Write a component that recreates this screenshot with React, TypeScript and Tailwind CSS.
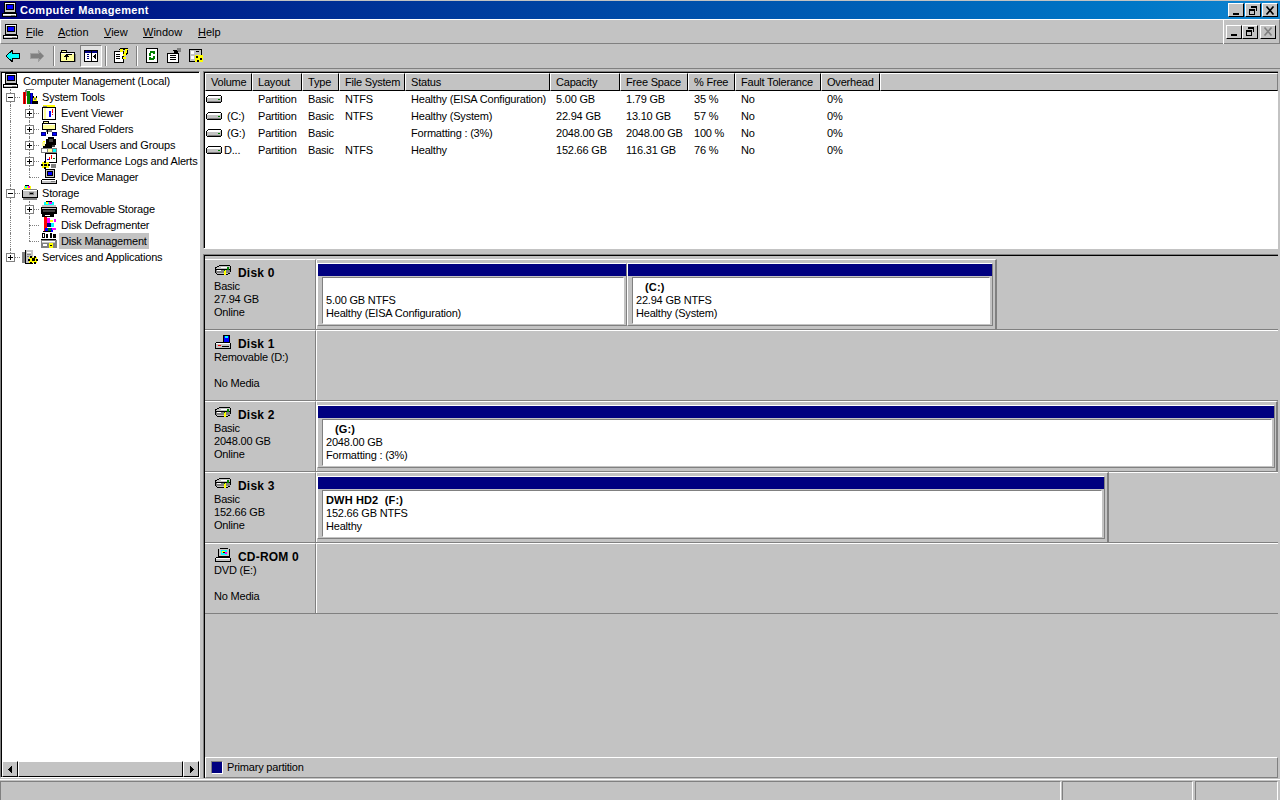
import React from 'react';

type R = [number, number, number, number, string];

// small pixel icon, drawn from rects
const Px: React.FC<{ r: R[]; w?: number; h?: number }> = ({ r, w = 16, h = 16 }) => (
  <svg width={w} height={h} viewBox={`0 0 ${w} ${h}`} shapeRendering="crispEdges" className="shrink-0 block">
    {r.map((p, i) => (
      <rect key={i} x={p[0]} y={p[1]} width={p[2]} height={p[3]} fill={p[4]} />
    ))}
  </svg>
);

const K = '#000000';
const G = '#808080';
const L = '#c3c3c3';
const W = '#ffffff';
const B = '#0000ff';
const N = '#000080';
const Y = '#ffff00';
const F = '#ffff99';
const C = '#00ffff';
const M = '#ff00ff';
const RD = '#ff0000';
const GR = '#008000';

const computer: R[] = [
  [2, 0, 12, 11, K], [3, 1, 10, 9, L], [4, 2, 8, 6, K], [5, 3, 6, 4, B], [3, 1, 10, 1, W],
  [0, 11, 15, 4, K], [1, 12, 13, 2, L], [1, 12, 13, 1, W], [9, 13, 4, 1, G],
];
const drive: R[] = [
  [2, 3, 13, 1, K], [1, 4, 1, 1, K], [0, 5, 1, 5, K], [15, 4, 1, 6, K], [1, 10, 14, 1, K],
  [1, 5, 14, 5, L], [2, 4, 13, 1, W], [1, 5, 13, 1, W], [2, 9, 13, 1, G], [12, 7, 2, 1, GR],
];
const folder: R[] = [
  [1, 2, 6, 2, K], [2, 3, 4, 1, F], [0, 4, 15, 10, K], [1, 5, 13, 8, F], [1, 5, 13, 1, W], [15, 6, 1, 8, G],
];
const systemTools: R[] = [
  [4, 0, 8, 1, G], [3, 1, 2, 6, G], [1, 3, 3, 12, RD], [2, 3, 1, 12, '#800000'], [5, 2, 3, 13, GR], [8, 4, 3, 11, N], [9, 4, 1, 11, B],
  [11, 8, 4, 4, Y], [10, 12, 6, 3, K], [12, 9, 2, 2, G], [11, 7, 1, 2, K], [14, 7, 1, 2, K],
];
const eventViewer: R[] = [
  [2, 0, 12, 2, Y], [2, 1, 4, 1, G], [1, 2, 14, 13, K], [2, 3, 12, 11, W], [3, 3, 2, 11, F], [8, 6, 2, 6, B], [11, 4, 1, 4, RD], [11, 9, 1, 1, RD],
];
const sharedFolders: R[] = [
  [2, 0, 6, 2, K], [3, 1, 4, 1, F], [1, 2, 14, 7, K], [2, 3, 12, 5, F], [2, 3, 12, 1, W],
  [5, 9, 6, 2, G], [6, 9, 1, 4, K], [0, 11, 5, 4, N], [11, 11, 5, 4, N], [1, 12, 3, 2, B], [12, 12, 3, 2, B],
];
const users: R[] = [
  [7, 0, 6, 2, K], [5, 2, 10, 6, K], [8, 2, 4, 3, '#404040'], [2, 7, 9, 5, K], [11, 8, 3, 2, '#404040'],
  [0, 11, 16, 5, G], [1, 12, 5, 3, W], [7, 12, 4, 3, F], [12, 12, 3, 3, C], [1, 5, 3, 4, F], [2, 4, 2, 1, Y],
];
const perfLogs: R[] = [
  [4, 0, 12, 10, K], [5, 1, 10, 8, W], [6, 6, 2, 1, B], [8, 4, 1, 3, RD], [10, 2, 1, 4, RD], [12, 5, 2, 1, GR],
  [1, 9, 7, 6, Y], [0, 11, 2, 2, K], [7, 11, 2, 2, K], [3, 8, 2, 2, K], [3, 14, 2, 2, K], [3, 11, 3, 2, K], [10, 11, 5, 4, G],
];
const deviceMgr: R[] = [
  [4, 0, 10, 9, K], [5, 1, 8, 7, L], [6, 2, 6, 5, K], [7, 3, 4, 3, B], [1, 10, 13, 1, K], [0, 11, 16, 4, K], [1, 11, 14, 3, L], [1, 11, 14, 1, W], [10, 12, 4, 1, G],
];
const storage: R[] = [
  [3, 0, 4, 1, K], [2, 1, 7, 3, Y], [3, 1, 2, 2, C], [6, 1, 2, 2, M], [1, 4, 14, 1, G], [0, 5, 16, 8, K], [1, 5, 14, 7, L], [1, 5, 14, 1, W], [7, 7, 5, 3, G], [8, 8, 3, 1, K],
  [1, 13, 14, 2, G],
];
const removable: R[] = [
  [5, 0, 6, 1, K], [3, 1, 10, 3, C], [5, 1, 2, 2, Y], [8, 1, 3, 2, M], [1, 4, 14, 2, L], [0, 6, 16, 7, K], [1, 7, 14, 1, L], [2, 9, 12, 2, '#404040'], [1, 13, 12, 3, K], [4, 14, 5, 1, W],
];
const defrag: R[] = [
  [3, 0, 3, 14, RD], [6, 1, 3, 5, M], [9, 3, 3, 2, Y], [6, 6, 4, 4, N], [10, 6, 3, 4, C], [13, 2, 2, 3, M], [4, 11, 8, 4, B], [7, 11, 3, 3, GR], [11, 11, 4, 2, M], [2, 14, 8, 1, K],
];
const diskMgmt: R[] = [
  [1, 0, 3, 5, K], [2, 1, 1, 3, W], [5, 1, 2, 4, K], [9, 0, 2, 5, K], [12, 1, 3, 4, K], [0, 6, 15, 1, K], [0, 7, 16, 8, G], [1, 8, 13, 2, L], [1, 8, 13, 1, W], [2, 11, 4, 2, W], [8, 10, 4, 5, Y], [9, 12, 2, 1, K],
];
const services: R[] = [
  [3, 1, 8, 14, K], [4, 1, 7, 13, L], [5, 3, 4, 1, W], [5, 5, 4, 1, G], [5, 7, 2, 1, G], [0, 3, 3, 11, G], [7, 8, 8, 6, Y], [8, 7, 2, 2, K], [12, 7, 2, 2, K], [6, 10, 2, 2, K], [14, 10, 2, 2, K], [10, 9, 3, 3, K], [8, 13, 2, 2, K], [12, 13, 2, 2, K],
];
const disk: R[] = [
  [4, 1, 11, 1, K], [2, 2, 2, 1, K], [0, 3, 2, 1, K], [15, 2, 1, 3, K], [0, 4, 1, 5, K], [15, 5, 1, 3, K], [2, 10, 11, 1, K], [1, 9, 1, 1, K], [13, 8, 2, 2, K],
  [4, 2, 11, 1, L], [2, 3, 13, 2, L], [1, 4, 14, 1, L], [6, 3, 6, 1, W], [1, 5, 14, 1, K], [1, 6, 14, 3, G], [2, 6, 4, 1, W], [9, 6, 2, 5, Y], [9, 6, 1, 1, GR], [12, 3, 2, 3, GR],
];
const diskRemovable: R[] = [
  [8, 0, 7, 8, K], [9, 1, 5, 6, B], [10, 1, 3, 2, C], [1, 7, 14, 1, K], [0, 8, 16, 6, K], [1, 8, 14, 5, L], [1, 8, 14, 1, W], [3, 10, 3, 1, RD], [7, 11, 7, 1, K],
];
const cdrom: R[] = [
  [5, 0, 8, 1, K], [3, 1, 12, 8, K], [4, 1, 10, 7, L], [6, 2, 6, 5, C], [7, 3, 3, 2, Y], [10, 4, 2, 2, M], [8, 4, 2, 1, K], [1, 9, 14, 1, K], [0, 10, 16, 4, K], [1, 10, 14, 3, L], [1, 10, 14, 1, W],
];

const raised = 'border-t border-l border-t-white border-l-white border-b border-r border-b-[#808080] border-r-[#808080]';
const sunken = 'border-t border-l border-t-[#808080] border-l-[#808080] border-b border-r border-b-white border-r-white';
const deepInset = 'border-t border-l border-t-[#808080] border-l-[#808080] shadow-[inset_1px_1px_0_#000]';

const CapButton: React.FC<{ kind: 'min' | 'max' | 'close'; disabled?: boolean }> = ({ kind, disabled }) => (
  <div className="w-[16px] h-[14px] bg-[#c3c3c3] border-t border-l border-t-white border-l-white border-b border-r border-b-black border-r-black flex items-center justify-center">
    {kind === 'min' && <Px w={10} h={9} r={[[2, 7, 6, 2, K]]} />}
    {kind === 'max' && (
      <Px w={10} h={9} r={[[3, 0, 6, 2, K], [8, 0, 1, 5, K], [1, 3, 6, 2, K], [1, 3, 1, 6, K], [6, 3, 1, 6, K], [1, 8, 6, 1, K]]} />
    )}
    {kind === 'close' && (
      <svg width="10" height="9" viewBox="0 0 10 9" className="block">
        <path d="M1.5 0.5 L8.5 8.5 M8.5 0.5 L1.5 8.5" stroke={disabled ? '#808080' : '#000'} strokeWidth="1.6" />
      </svg>
    )}
  </div>
);

const Menu: React.FC<{ u: string; rest: string; w: number }> = ({ u, rest, w }) => (
  <span style={{ width: w }} className="shrink-0">
    <span className="underline">{u}</span>
    {rest}
  </span>
);

const ToolSep = () => <div className="w-[2px] h-[20px] border-l border-l-[#808080] border-r border-r-white" />;

const arrowBack = (fill: string, edge: string) => (
  <svg width="16" height="12" viewBox="0 0 16 12" shapeRendering="crispEdges" className="block">
    <path d="M7 0.5 L1 6 L7 11.5 V8.5 H14.5 V3.5 H7 Z" fill={fill} stroke={edge} />
  </svg>
);

type TreeProps = {
  guides?: boolean[];
  exp?: '+' | '-';
  icon: R[];
  label: string;
  selected?: boolean;
  last?: boolean;
};

// one tree line: indent guides, then connector cell, icon and label
const TreeRow: React.FC<TreeProps> = ({ guides = [], exp, icon, label, selected, last }) => (
  <div className="h-[16px] flex items-center">
    {guides.map((g, i) => (
      <div key={i} className="w-[19px] h-[16px] shrink-0">
        {g && <div className="ml-[8px] h-[16px] border-l border-dotted border-l-[#808080]" />}
      </div>
    ))}
    <div className="w-[19px] h-[16px] shrink-0 relative">
      <div className={`ml-[8px] border-l border-dotted border-l-[#808080] ${last ? 'h-[8px]' : 'h-[16px]'}`} />
      <div className="absolute left-[8px] top-[8px] w-[10px] border-t border-dotted border-t-[#808080]" />
      {exp && (
        <div className="absolute left-[4px] top-[4px] w-[9px] h-[9px] bg-white border border-[#808080] flex items-center justify-center">
          <Px w={7} h={7} r={exp === '+' ? [[1, 3, 5, 1, K], [3, 1, 1, 5, K]] : [[1, 3, 5, 1, K]]} />
        </div>
      )}
    </div>
    <div className="ml-[1px]">
      <Px r={icon} />
    </div>
    <div className={`ml-[2px] px-[2px] h-[16px] leading-[16px] whitespace-nowrap ${selected ? 'bg-[#c3c3c3]' : ''}`}>{label}</div>
  </div>
);

const columns = [
  { t: 'Volume', w: 47 },
  { t: 'Layout', w: 50 },
  { t: 'Type', w: 37 },
  { t: 'File System', w: 66 },
  { t: 'Status', w: 145 },
  { t: 'Capacity', w: 70 },
  { t: 'Free Space', w: 68 },
  { t: '% Free', w: 47 },
  { t: 'Fault Tolerance', w: 86 },
  { t: 'Overhead', w: 59 },
];

const volumes = [
  ['', 'Partition', 'Basic', 'NTFS', 'Healthy (EISA Configuration)', '5.00 GB', '1.79 GB', '35 %', 'No', '0%'],
  ['(C:)', 'Partition', 'Basic', 'NTFS', 'Healthy (System)', '22.94 GB', '13.10 GB', '57 %', 'No', '0%'],
  ['(G:)', 'Partition', 'Basic', '', 'Formatting : (3%)', '2048.00 GB', '2048.00 GB', '100 %', 'No', '0%'],
  ['D...', 'Partition', 'Basic', 'NTFS', 'Healthy', '152.66 GB', '116.31 GB', '76 %', 'No', '0%'],
];

const Partition: React.FC<{ w: number; title?: string; indent?: boolean; size: string; status: string }> = ({ w, title, indent, size, status }) => (
  <div style={{ width: w }} className="h-[63px] shrink-0 border-t border-l border-t-white border-l-white border-r border-b border-r-[#808080] border-b-[#808080]">
    <div className="h-[12px] bg-[#000080]" />
    <div className={`mt-px h-[47px] ml-[4px] mr-[2px] bg-white pl-[3px] pt-[3px] leading-[13px] ${sunken}`}>
      <div className={`h-[13px] font-bold tracking-[0.15px] whitespace-pre ${indent ? 'pl-[9px]' : ''}`}>{title ?? ''}</div>
      <div>{size}</div>
      <div>{status}</div>
    </div>
  </div>
);

const DiskRow: React.FC<{ icon: R[]; name: string; lines: string[]; first?: boolean; frame?: number; children?: React.ReactNode }> = ({ icon, name, lines, first, frame, children }) => (
  <div className="h-[71px] shrink-0 flex border-b border-b-[#808080]">
    <div className="w-[111px] shrink-0 border-t border-t-white border-r border-r-[#808080] pl-[9px] pt-[4px] leading-[13px]">
      <div className="flex items-center h-[16px]">
        <div className="ml-px">
          <Px r={icon} />
        </div>
        <span className="ml-[7px] pt-[2px] font-bold text-[12px] tracking-[0.2px]">{name}</span>
      </div>
      {lines.map((l, i) => (
        <div key={i} className="h-[13px] whitespace-pre">{l}</div>
      ))}
    </div>
    <div className={`flex-1 border-l border-l-white border-t ${first ? 'border-t-transparent' : 'border-t-white'}`}>
      {frame && (
        <div style={{ width: frame }} className="-mt-px h-[70px] pt-[3px] border-t border-t-white border-r-2 border-r-[#808080] flex">
          {children}
        </div>
      )}
    </div>
  </div>
);

export default function App() {
  return (
    <div className="w-[1280px] h-[800px] flex flex-col overflow-hidden bg-[#c3c3c3] text-black text-[11px] tracking-[-0.2px] [font-family:'Liberation_Sans',Arial,sans-serif]">
      {/* Title bar */}
      <div className="mt-px h-[18px] shrink-0 flex items-center bg-gradient-to-r from-[#000080] to-[#1084d0] pl-[2px] pr-[2px]">
        <Px r={computer} />
        <span className="ml-[2px] text-white font-bold text-[11px] tracking-[0.35px]">Computer Management</span>
        <div className="ml-auto flex">
          <CapButton kind="min" />
          <div className="mr-[1px]" />
          <CapButton kind="max" />
          <div className="ml-[1px]" />
          <CapButton kind="close" />
        </div>
      </div>

      {/* Menu bar */}
      <div className={`h-[25px] shrink-0 flex items-center pl-[2px] pr-[3px] ${raised}`}>
        <Px r={computer} />
        <div className="ml-[7px] pt-px flex tracking-[0px]">
          <Menu u="F" rest="ile" w={32} />
          <Menu u="A" rest="ction" w={46} />
          <Menu u="V" rest="iew" w={39} />
          <Menu u="W" rest="indow" w={55} />
          <Menu u="H" rest="elp" w={30} />
        </div>
        <div className="ml-auto h-[24px] border-l border-l-white pl-[2px] flex items-center">
          <CapButton kind="min" />
          <CapButton kind="max" />
          <div className="ml-[2px]" />
          <CapButton kind="close" disabled />
        </div>
      </div>

      {/* Toolbar */}
      <div className="h-[25px] shrink-0 flex items-center pl-[5px] border-b border-b-[#808080]">
        {arrowBack(C, '#000000')}
        <div className="ml-[8px] scale-x-[-1]">{arrowBack('#808080', '#a0a0a0')}</div>
        <div className="ml-[8px]"><ToolSep /></div>
        <div className="ml-[5px]">
          <Px r={[...folder, [6, 6, 1, 6, K], [6, 6, 6, 1, K], [4, 8, 5, 1, K], [5, 7, 3, 1, K]]} />
        </div>
        <div className={`ml-[4px] w-[22px] h-[22px] flex items-center justify-center bg-[#e0e0e0] ${sunken}`}>
          <Px r={[[1, 2, 14, 12, K], [2, 3, 12, 10, W], [2, 3, 12, 2, N], [8, 3, 1, 10, K], [4, 6, 2, 1, N], [4, 8, 2, 1, N], [4, 10, 2, 1, N], [10, 8, 1, 1, K], [11, 7, 1, 3, K], [12, 6, 1, 5, K]]} />
        </div>
        <div className="ml-[3px]"><ToolSep /></div>
        <div className="ml-[6px]">
          <Px r={[[1, 3, 10, 12, K], [2, 4, 8, 10, W], [3, 6, 4, 1, K], [3, 8, 4, 1, K], [3, 10, 4, 1, K], [7, 0, 8, 1, K], [6, 1, 9, 1, K], [7, 1, 3, 3, Y], [12, 1, 3, 4, Y], [14, 2, 1, 4, K], [11, 4, 3, 2, Y], [10, 6, 3, 2, Y], [13, 5, 1, 2, K], [10, 9, 3, 2, Y], [9, 8, 1, 3, K]]} />
        </div>
        <div className="ml-[7px]"><ToolSep /></div>
        <div className="ml-[6px]">
          <Px r={[[2, 0, 12, 15, K], [3, 1, 10, 13, W], [6, 3, 4, 2, GR], [9, 3, 2, 3, GR], [5, 5, 2, 3, GR], [6, 10, 4, 2, GR], [5, 9, 2, 3, GR], [9, 8, 2, 3, GR]]} />
        </div>
        <div className="ml-[6px]">
          <Px r={[[1, 5, 12, 10, K], [2, 6, 10, 8, W], [4, 7, 6, 1, K], [4, 9, 6, 1, K], [4, 11, 6, 1, K], [7, 2, 6, 1, K], [11, 0, 4, 4, G], [8, 3, 4, 3, K]]} />
        </div>
        <div className="ml-[6px]">
          <Px r={[[1, 1, 13, 13, K], [2, 2, 11, 11, L], [3, 3, 3, 3, W], [8, 3, 3, 1, K], [3, 8, 3, 3, W], [7, 7, 8, 7, Y], [8, 8, 2, 2, K], [12, 10, 2, 2, K], [9, 12, 2, 2, K]]} />
        </div>
      </div>

      {/* Main area */}
      <div className="flex-1 min-h-0 flex pt-[2px] pr-[2px]">
        <div className={`w-[200px] shrink-0 flex flex-col bg-white ${deepInset} border-r border-r-white border-b border-b-white`}>
          <div className="flex-1 pt-[1px] pl-[1px]">
            <div className="h-[16px] flex items-center pl-[1px]">
              <Px r={computer} />
              <span className="ml-[4px]">Computer Management (Local)</span>
            </div>
            <TreeRow exp="-" icon={systemTools} label="System Tools" />
            <TreeRow guides={[true]} exp="+" icon={eventViewer} label="Event Viewer" />
            <TreeRow guides={[true]} exp="+" icon={sharedFolders} label="Shared Folders" />
            <TreeRow guides={[true]} exp="+" icon={users} label="Local Users and Groups" />
            <TreeRow guides={[true]} exp="+" icon={perfLogs} label="Performance Logs and Alerts" />
            <TreeRow guides={[true]} icon={deviceMgr} label="Device Manager" last />
            <TreeRow exp="-" icon={storage} label="Storage" />
            <TreeRow guides={[true]} exp="+" icon={removable} label="Removable Storage" />
            <TreeRow guides={[true]} icon={defrag} label="Disk Defragmenter" />
            <TreeRow guides={[true]} icon={diskMgmt} label="Disk Management" selected last />
            <TreeRow exp="+" icon={services} label="Services and Applications" last />
          </div>
          <div className="h-[16px] shrink-0 ml-px flex bg-[#c3c3c3]">
            <div className={`w-[16px] flex items-center justify-center ${raised} border-b-black border-r-black`}>
              <Px w={5} h={7} r={[[3, 0, 1, 7, K], [2, 1, 1, 5, K], [1, 2, 1, 3, K], [0, 3, 1, 1, K]]} />
            </div>
            <div className={`flex-1 ${raised} border-b-black border-r-black`} />
            <div className={`w-[16px] flex items-center justify-center ${raised} border-b-black border-r-black`}>
              <Px w={5} h={7} r={[[1, 0, 1, 7, K], [2, 1, 1, 5, K], [3, 2, 1, 3, K], [4, 3, 1, 1, K]]} />
            </div>
          </div>
        </div>
        <div className="w-[3px] shrink-0" />

        <div className="flex-1 min-w-0 flex flex-col">
          {/* Volume list */}
          <div className={`h-[178px] shrink-0 bg-white flex flex-col pl-px pt-px ${deepInset} border-b border-b-white`}>
            <div className="h-[18px] shrink-0 flex bg-[#c3c3c3]">
              {columns.map((c) => (
                <div key={c.t} style={{ width: c.w }} className={`shrink-0 pl-[5px] leading-[17px] whitespace-nowrap ${raised} border-b-black border-r-black`}>
                  {c.t}
                </div>
              ))}
              <div className={`flex-1 ${raised} border-b-black`} />
            </div>
            {volumes.map((v, i) => (
              <div key={i} className="h-[17px] shrink-0 flex items-center">
                {v.map((cell, j) => (
                  <div key={j} style={{ width: columns[j].w }} className={`shrink-0 whitespace-nowrap ${j === 0 ? 'flex items-center pl-[1px]' : 'pl-[6px]'}`}>
                    {j === 0 && <Px r={drive} />}
                    {j === 0 ? <span className={cell === 'D...' ? 'ml-[2px]' : 'ml-[5px]'}>{cell}</span> : cell}
                  </div>
                ))}
              </div>
            ))}
          </div>
          <div className="h-[5px] shrink-0" />

          {/* Graphical disk view */}
          <div className={`flex-1 min-h-0 flex flex-col pl-px pt-[4px] ${deepInset}`}>
            <DiskRow first icon={disk} name="Disk 0" lines={['Basic', '27.94 GB', 'Online']} frame={680}>
              <Partition w={310} size="5.00 GB NTFS" status="Healthy (EISA Configuration)" />
              <Partition w={366} title="(C:)" indent size="22.94 GB NTFS" status="Healthy (System)" />
            </DiskRow>
            <DiskRow icon={diskRemovable} name="Disk 1" lines={['Removable (D:)', '', 'No Media']} />
            <DiskRow icon={disk} name="Disk 2" lines={['Basic', '2048.00 GB', 'Online']} frame={961}>
              <Partition w={958} title="(G:)" indent size="2048.00 GB" status="Formatting : (3%)" />
            </DiskRow>
            <DiskRow icon={disk} name="Disk 3" lines={['Basic', '152.66 GB', 'Online']} frame={792}>
              <Partition w={788} title="DWH HD2  (F:)" size="152.66 GB NTFS" status="Healthy" />
            </DiskRow>
            <DiskRow icon={cdrom} name="CD-ROM 0" lines={['DVD (E:)', '', 'No Media']} />
            <div className="flex-1" />
            <div className={`h-[21px] shrink-0 flex items-center pl-[5px] ${raised}`}>
              <div className="w-[12px] h-[13px] bg-[#000080] border border-[#808080] border-r-white border-b-white" />
              <span className="ml-[4px]">Primary partition</span>
            </div>
          </div>
        </div>
      </div>

      {/* Status bar */}
      <div className="h-[21px] shrink-0 pt-[1px] mt-px flex border-t border-t-white">
        <div className={`w-[1061px] ${sunken} border-b-0`} />
        <div className={`ml-[1px] w-[131px] ${sunken} border-b-0`} />
        <div className={`ml-[2px] w-[83px] ${sunken} border-b-0`} />
      </div>
    </div>
  );
}
